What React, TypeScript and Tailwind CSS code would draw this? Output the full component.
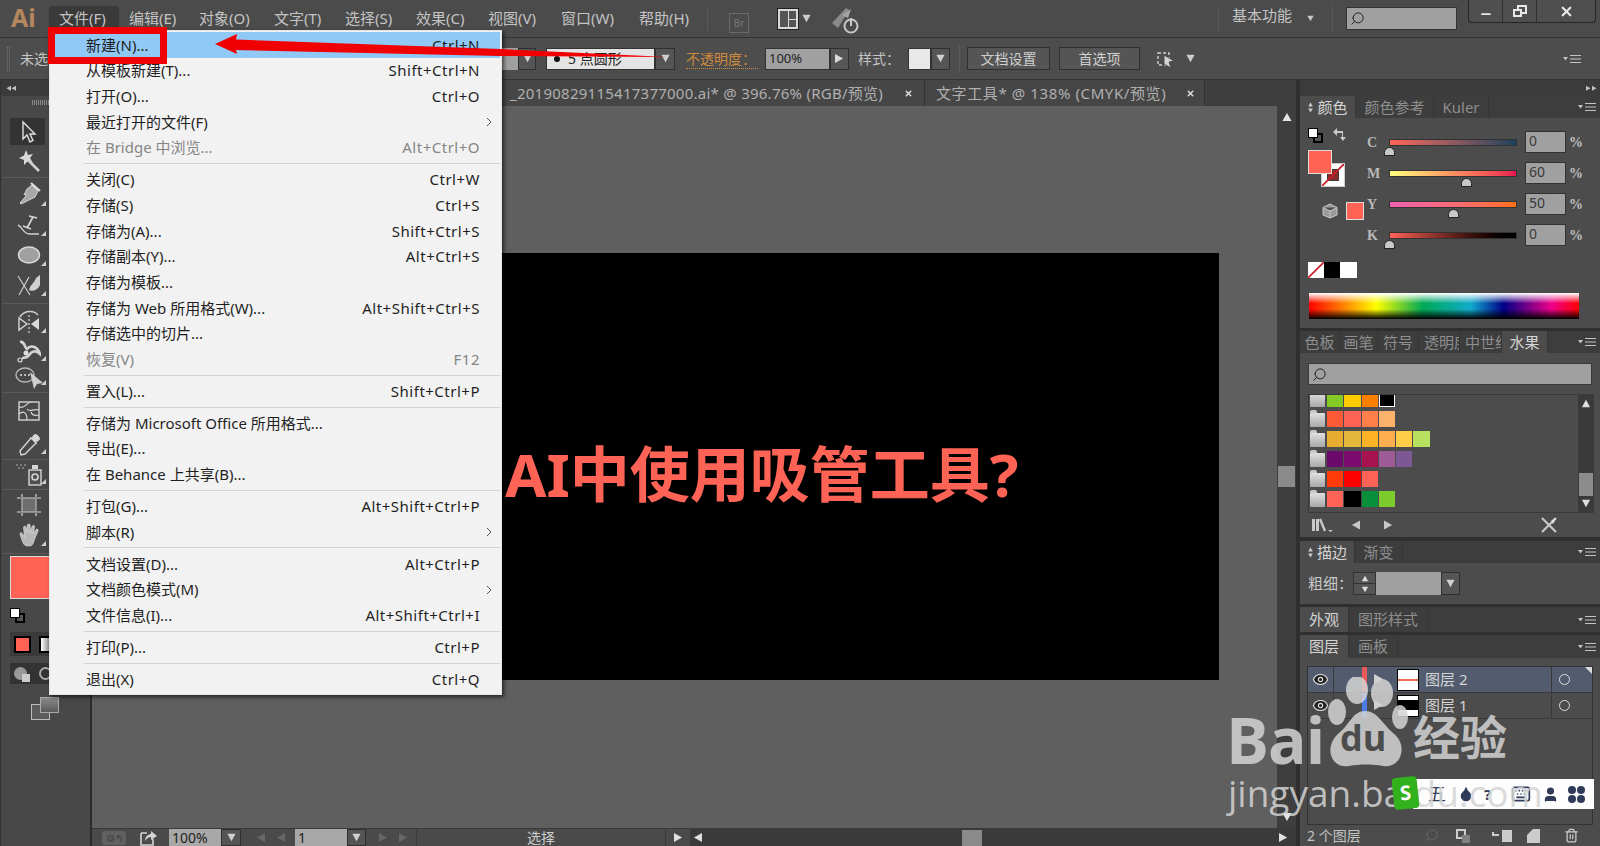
import React from "react";
import { Search, X, Minus, Eye, Keyboard, User, Trash2, Droplet } from "lucide-react";

const menuItems = [
  { label: "文件(F)", box: "w-[70px] pl-[10px] bg-[#3a3a3a] rounded-t-[3px]" },
  { label: "编辑(E)", box: "w-[80px] pl-[10px]" },
  { label: "对象(O)", box: "w-[75px]" },
  { label: "文字(T)", box: "w-[71px]" },
  { label: "选择(S)", box: "w-[71px]" },
  { label: "效果(C)", box: "w-[72px]" },
  { label: "视图(V)", box: "w-[73px]" },
  { label: "窗口(W)", box: "w-[78px]" },
  { label: "帮助(H)", box: "w-[69px]" },
];

const fileMenu: ({ label: string; keys?: string; off?: boolean; sub?: boolean; active?: boolean } | "sep")[] = [
  { label: "新建(N)...", keys: "Ctrl+N", active: true },
  { label: "从模板新建(T)...", keys: "Shift+Ctrl+N" },
  { label: "打开(O)...", keys: "Ctrl+O" },
  { label: "最近打开的文件(F)", sub: true },
  { label: "在 Bridge 中浏览...", keys: "Alt+Ctrl+O", off: true },
  "sep",
  { label: "关闭(C)", keys: "Ctrl+W" },
  { label: "存储(S)", keys: "Ctrl+S" },
  { label: "存储为(A)...", keys: "Shift+Ctrl+S" },
  { label: "存储副本(Y)...", keys: "Alt+Ctrl+S" },
  { label: "存储为模板..." },
  { label: "存储为 Web 所用格式(W)...", keys: "Alt+Shift+Ctrl+S" },
  { label: "存储选中的切片..." },
  { label: "恢复(V)", keys: "F12", off: true },
  "sep",
  { label: "置入(L)...", keys: "Shift+Ctrl+P" },
  "sep",
  { label: "存储为 Microsoft Office 所用格式..." },
  { label: "导出(E)..." },
  { label: "在 Behance 上共享(B)..." },
  "sep",
  { label: "打包(G)...", keys: "Alt+Shift+Ctrl+P" },
  { label: "脚本(R)", sub: true },
  "sep",
  { label: "文档设置(D)...", keys: "Alt+Ctrl+P" },
  { label: "文档颜色模式(M)", sub: true },
  { label: "文件信息(I)...", keys: "Alt+Shift+Ctrl+I" },
  "sep",
  { label: "打印(P)...", keys: "Ctrl+P" },
  "sep",
  { label: "退出(X)", keys: "Ctrl+Q" },
];

const swatchRows = [
  { box: "h-[12px] items-end", colors: ["#84c925", "#ffcc00", "#ff7f00", "#000000"] },
  { box: "h-[20px] items-end", colors: ["#ff5a36", "#ff6355", "#ff7f4a", "#ffb26b"] },
  { box: "h-[20px] items-end", colors: ["#e8ac30", "#e3b83b", "#ffb325", "#ffae4f", "#ffcd47", "#b7e15e"] },
  { box: "h-[20px] items-end", colors: ["#6b0a6b", "#7a0a6e", "#a8124f", "#9e5c96", "#7e5795"] },
  { box: "h-[20px] items-end", colors: ["#ff3b0a", "#ff0000", "#ff6358"] },
  { box: "h-[20px] items-end", colors: ["#ff6358", "#000000", "#078f3c", "#7ccb2f"] },
];

function Tri({ dir, className }: { dir: "up" | "down" | "left" | "right"; className?: string }) {
  const pts = { up: "0,10 5,1 10,10", down: "0,1 10,1 5,10", left: "10,0 10,10 1,5", right: "0,0 0,10 9,5" };
  return (
    <svg viewBox="0 0 10 11" className={className}>
      <polygon points={pts[dir]} fill="currentColor" />
    </svg>
  );
}

function PanelMenu() {
  return (
    <svg viewBox="0 0 18 10" className="h-[10px] w-[18px] text-[#c4c4c4]">
      <polygon points="0,3 5,3 2.5,6.5" fill="currentColor" />
      <path d="M7 1.5h11M7 5h11M7 8.5h11" stroke="currentColor" strokeWidth="1.2" />
    </svg>
  );
}

function Sep() {
  return <div className="h-full w-px bg-[#3a3a3a] border-r border-[#5a5a5a]" />;
}

function Dropdown({ className }: { className?: string }) {
  return (
    <div className={`flex h-full items-center justify-center border border-[#2f2f2f] bg-[#555555] text-[#d0d0d0] ${className}`}>
      <Tri dir="down" className="h-[9px] w-[9px]" />
    </div>
  );
}

function TitleBar() {
  return (
    <div className="flex h-[38px] shrink-0 border-b border-[#333333] bg-[#4b4b4b] text-[15px] text-[#c4c4c4]">
      <div className="flex w-[49px] items-start pl-[11px] pt-[1px] text-[25px] font-bold leading-[32px] text-[#b5875f]">Ai</div>
      <div className="flex pt-[6px]">
        {menuItems.map((m) => (
          <div key={m.label} className={`flex h-[24px] items-center whitespace-nowrap ${m.box}`}>
            {m.label}
          </div>
        ))}
      </div>
      <div className="my-[7px] ml-[-1px]"><Sep /></div>
      <div className="ml-[21px] mt-[13px] flex h-[20px] w-[20px] items-center justify-center border border-[#6a6a6a] text-[10px] text-[#777777]">Br</div>
      <div className="ml-[28px] mt-[8px] flex h-[22px] w-[22px] gap-px border border-[#222222] bg-[#d8d8d8] p-[2px]">
        <div className="w-[8px] bg-[#555555]" />
        <div className="flex flex-1 flex-col gap-px">
          <div className="flex-1 bg-[#555555]" />
          <div className="flex-1 bg-[#555555]" />
        </div>
      </div>
      <Tri dir="down" className="ml-[3px] mt-[14px] h-[9px] w-[9px] text-[#cccccc]" />
      <svg viewBox="0 0 30 28" className="ml-[19px] mt-[6px] h-[28px] w-[30px]">
        <path d="M2 17 L16 2 L19 4 L13 14 L8 22 Z" fill="#8a8a8a" />
        <path d="M12 9 L21 3 L18 12 Z" fill="#a5a5a5" />
        <circle cx="21" cy="20" r="6.5" fill="none" stroke="#c8c8c8" strokeWidth="2" />
        <path d="M21 12 V20" stroke="#c8c8c8" strokeWidth="2" />
      </svg>
      <div className="flex-1" />
      <div className="my-[6px]"><Sep /></div>
      <div className="ml-[13px] flex w-[61px] items-center whitespace-nowrap pb-[6px]">基本功能</div>
      <Tri dir="down" className="ml-[14px] mt-[15px] h-[7px] w-[7px] text-[#c4c4c4]" />
      <div className="my-[6px] ml-[18px]"><Sep /></div>
      <div className="ml-[13px] mt-[7px] flex h-[23px] w-[111px] items-center border border-[#333333] bg-[#a0a0a0] pl-[3px]">
        <Search size={15} strokeWidth={1.6} className="-scale-x-100 text-[#222222]" />
      </div>
      <div className="ml-[11px] mr-[4px] flex h-[23px] w-[128px] rounded-b-[4px] border border-t-0 border-[#262626] bg-[#4f4f4f] text-[#e8e8e8]">
        <div className="flex w-[34px] items-center justify-center border-r border-[#2f2f2f] pt-[5px]"><Minus size={14} strokeWidth={3} /></div>
        <div className="flex w-[34px] items-center justify-center border-r border-[#2f2f2f]">
          <div className="relative h-[12px] w-[14px]">
            <div className="absolute right-0 top-0 h-[9px] w-[10px] border-2 border-[#e8e8e8]" />
            <div className="absolute bottom-0 left-0 h-[8px] w-[9px] border-2 border-[#e8e8e8] bg-[#4f4f4f]" />
          </div>
        </div>
        <div className="flex flex-1 items-center justify-center"><X size={15} strokeWidth={3.5} /></div>
      </div>
    </div>
  );
}

function ControlBar() {
  return (
    <div className="flex h-[42px] shrink-0 items-center border-b border-[#333333] bg-[#4d4d4d] text-[14px] text-[#c4c4c4]">
      <div className="ml-[7px] h-[24px] w-[3px] border-x border-dotted border-[#777777]" />
      <div className="ml-[10px] w-[480px] whitespace-nowrap">未选择对象</div>
      <div className="flex h-[22px]">
        <div className="w-[18px] bg-[#a0a0a0]" />
        <Dropdown className="w-[18px]" />
      </div>
      <div className="ml-[10px] flex h-[22px]">
        <div className="flex w-[109px] items-center border border-[#333333] bg-[#e4e4e4] pl-[7px] text-[14px] text-[#222222]">
          <span className="mr-[8px] h-[6px] w-[6px] rounded-full bg-[#111111]" />
          <span className="whitespace-nowrap">5 点圆形</span>
        </div>
        <Dropdown className="w-[20px]" />
      </div>
      <span className="ml-[11px] w-[72px] whitespace-nowrap border-b border-dotted border-[#c98a3e] text-[#cf8b3c] leading-[19px]">不透明度：</span>
      <div className="ml-[7px] flex h-[22px]">
        <div className="w-[65px] border border-[#333333] bg-[#a0a0a0] pl-[3px] text-[13px] leading-[18px] text-[#222222]">100%</div>
        <div className="flex w-[19px] items-center justify-center border border-[#2f2f2f] bg-[#555555] text-[#d8d8d8]"><Tri dir="right" className="h-[10px] w-[9px]" /></div>
      </div>
      <span className="ml-[9px] w-[50px] whitespace-nowrap">样式：</span>
      <div className="flex h-[22px]">
        <div className="w-[23px] border border-[#333333] bg-[#e8e8e8]" />
        <Dropdown className="w-[19px]" />
      </div>
      <div className="ml-[9px] h-[28px]"><Sep /></div>
      <div className="ml-[7px] flex h-[23px] w-[83px] items-center justify-center border border-[#2f2f2f] bg-[#555555] text-[#d0d0d0]">文档设置</div>
      <div className="ml-[9px] flex h-[23px] w-[81px] items-center justify-center border border-[#2f2f2f] bg-[#555555] text-[#d0d0d0]">首选项</div>
      <svg viewBox="0 0 22 22" className="ml-[15px] h-[22px] w-[22px]">
        <rect x="3" y="5" width="11" height="12" fill="none" stroke="#cfcfcf" strokeWidth="1.4" strokeDasharray="3 2" />
        <path d="M9 7 L19 13 L14 14 L16 20 L9 16 Z" fill="#d4d4d4" stroke="#4d4d4d" />
      </svg>
      <Tri dir="down" className="ml-[9px] h-[9px] w-[9px] text-[#cccccc]" />
      <div className="flex-1" />
      <div className="mr-[19px]"><PanelMenu /></div>
    </div>
  );
}

function Tool({ h, corner, children }: { h: string; corner?: boolean; children?: React.ReactNode }) {
  return (
    <div className={`relative flex w-[54px] items-center justify-center ${h}`}>
      {children}
      {corner && <div className="absolute bottom-[4px] right-[10px] h-0 w-0 border-b-[5px] border-l-[5px] border-b-[#d0d0d0] border-l-transparent" />}
    </div>
  );
}

function ToolSep({ h }: { h: string }) {
  return (
    <div className={`flex w-[48px] items-center ${h}`}>
      <div className="h-px w-full bg-[#5a5a5a]" />
    </div>
  );
}

const iconBox = "h-[24px] w-[24px]";

function LeftTools() {
  return (
    <div className="flex w-[92px] shrink-0 flex-col border-l border-[#333333] border-r-2 border-r-[#2b2b2b] bg-[#484848]">
      <div className="flex h-[16px] items-center gap-0 bg-[#3b3b3b] pl-[5px] text-[#c4c4c4]">
        <Tri dir="left" className="h-[7px] w-[5px]" />
        <Tri dir="left" className="h-[7px] w-[5px]" />
      </div>
      <div className="ml-[31px] mt-[4px] h-[5px] w-[18px] border-x-0 bg-[repeating-linear-gradient(to_right,#8a8a8a_0,#8a8a8a_1px,transparent_1px,transparent_2px)]" />
      <div className="mt-[13px] flex flex-col pl-px">
        <div className="ml-[8px] flex h-[27px] w-[35px] items-center justify-center bg-[#333333]">
          <svg viewBox="0 0 24 24" className={iconBox}>
            <path d="M7 2 V19 L11 15 L14 22 L17 20.5 L14 14 L19 14 Z" fill="#3a3a3a" stroke="#e0e0e0" strokeWidth="1.4" />
          </svg>
        </div>
        <Tool h="h-[31px]">
          <svg viewBox="0 0 24 24" className={iconBox}>
            <polygon points="9,1 11,6 16,5 13,9 16,14 10.5,12.5 7,16 7,11 2,9 7,6.5" fill="#d8d8d8" />
            <path d="M11 11 L22 22" stroke="#d0d0d0" strokeWidth="2.6" />
          </svg>
        </Tool>
        <ToolSep h="h-[2px]" />
        <Tool h="h-[32px]" corner>
          <svg viewBox="0 0 24 24" className={iconBox}>
            <path d="M15 3 L21 9 L18 15 L4 22 L3 21 L9 14 L8 12 L7 13 L10 7 Z" fill="#a8a8a8" stroke="#d8d8d8" strokeWidth="1" />
            <path d="M14 1 L23 9" stroke="#e0e0e0" strokeWidth="2" />
          </svg>
        </Tool>
        <Tool h="h-[30px]" corner>
          <svg viewBox="0 0 24 24" className={iconBox}>
            <path d="M1 12 C5 14 7 21 12 21 L22 21" fill="none" stroke="#cfcfcf" strokeWidth="1.4" />
            <path d="M12 3 L20 5 M16 4 L10 15 M6 13 L14 16" fill="none" stroke="#d8d8d8" strokeWidth="1.6" />
          </svg>
        </Tool>
        <Tool h="h-[30px]" corner>
          <svg viewBox="0 0 24 24" className="h-[24px] w-[24px]">
            <ellipse cx="12" cy="12" rx="10.5" ry="8" fill="#a0a0a0" stroke="#dadada" strokeWidth="1.4" />
          </svg>
        </Tool>
        <Tool h="h-[30px]" corner>
          <svg viewBox="0 0 24 24" className={iconBox}>
            <path d="M1 3 L13 22 M12 4 L2 22" stroke="#cfcfcf" strokeWidth="1.2" />
            <path d="M23 2 L23 12 C21 17 15 19 12 17 C13 12 18 9 19 5 Z" fill="#d0d0d0" />
          </svg>
        </Tool>
        <ToolSep h="h-[7px]" />
        <Tool h="h-[30px]" corner>
          <svg viewBox="0 0 24 24" className={iconBox}>
            <path d="M3 7 C7 0 17 0 21 5" fill="none" stroke="#cfcfcf" strokeWidth="1.6" />
            <polygon points="2,8 10,14 2,20" fill="none" stroke="#d8d8d8" strokeWidth="1.4" />
            <polygon points="22,8 14,14 22,20" fill="#d8d8d8" />
            <path d="M12 5 V24" stroke="#d8d8d8" strokeWidth="1.2" strokeDasharray="2 2" />
          </svg>
        </Tool>
        <Tool h="h-[28px]" corner>
          <svg viewBox="0 0 24 24" className={iconBox}>
            <path d="M3 3 C8 2 7 8 10 10 C14 5 21 8 23 15 C19 11 15 12 13 15 C11 18 7 19 5 19" fill="none" stroke="#d4d4d4" strokeWidth="2.6" />
            <circle cx="9" cy="14" r="2.5" fill="#dddddd" />
            <circle cx="3" cy="21" r="2" fill="none" stroke="#dddddd" strokeWidth="1.2" />
          </svg>
        </Tool>
        <Tool h="h-[24px]" corner>
          <svg viewBox="0 0 28 24" className="h-[24px] w-[28px]">
            <ellipse cx="10" cy="10" rx="9" ry="7" fill="none" stroke="#b8b8b8" strokeWidth="1.4" />
            <path d="M5 10h2M9 10h2M13 10h2" stroke="#dddddd" strokeWidth="1.6" />
            <path d="M15 7 L28 18 L22 19 L19 24 Z" fill="#cfcfcf" />
          </svg>
        </Tool>
        <ToolSep h="h-[7px]" />
        <Tool h="h-[30px]">
          <svg viewBox="0 0 22 20" className="h-[20px] w-[22px]">
            <rect x="1" y="1" width="20" height="18" fill="#4a4a4a" stroke="#d4d4d4" strokeWidth="1.4" />
            <path d="M1 6 C7 8 8 2 13 1 M1 13 C6 9 9 12 9 19 M9 8 C12 12 15 7 21 9 M13 11 C14 14 17 15 21 14" fill="none" stroke="#d4d4d4" strokeWidth="1.2" />
          </svg>
        </Tool>
        <div className="h-[6px]" />
        <Tool h="h-[26px]" corner>
          <svg viewBox="0 0 24 24" className={iconBox}>
            <path d="M14 5 L19 10 L8 21 L4 22 L3 18 Z" fill="none" stroke="#d4d4d4" strokeWidth="1.4" />
            <path d="M13 4 L20 11 M17 2 C19 0 24 5 22 7 L19 9 L15 5 Z" fill="#d4d4d4" stroke="#d4d4d4" strokeWidth="1" />
          </svg>
        </Tool>
        <ToolSep h="h-[2px]" />
        <Tool h="h-[28px]" corner>
          <svg viewBox="0 0 28 24" className="h-[24px] w-[28px]">
            <rect x="14" y="8" width="12" height="15" fill="#505050" stroke="#d4d4d4" strokeWidth="1.4" />
            <circle cx="20" cy="15" r="3" fill="none" stroke="#d4d4d4" strokeWidth="1.6" />
            <rect x="17" y="3" width="6" height="4" fill="#d4d4d4" />
            <path d="M1 3h2M5 3h2M9 3h2M3 6h2M7 6h2" stroke="#b0b0b0" strokeWidth="1.2" />
          </svg>
        </Tool>
        <ToolSep h="h-[2px]" />
        <Tool h="h-[30px]">
          <svg viewBox="0 0 24 24" className={iconBox}>
            <rect x="5" y="5" width="14" height="14" fill="#6e6e6e" stroke="#b8b8b8" strokeWidth="1.2" />
            <path d="M5 1v3M19 1v3M5 20v3M19 20v3M0 5h4M0 19h4M20 5h4M20 19h4" stroke="#d8d8d8" strokeWidth="1.2" />
          </svg>
        </Tool>
        <Tool h="h-[30px]" corner>
          <svg viewBox="0 0 24 24" className="h-[26px] w-[26px]">
            <path
              d="M4 12 C3 10 5 9 6 11 L8 14 L7 5 C7 3.5 9 3.5 9.3 5 L10 10 L10.5 3 C10.7 1.5 12.8 1.5 13 3 L13.2 10 L15 4 C15.4 2.6 17.3 3 17 4.5 L15.8 11 L18.5 7 C19.3 6 21 6.8 20.3 8.2 L17 16 C16 20 15 22 13 22 L10 22 C7 22 6 18 4 12 Z"
              fill="#b8b8b8"
              stroke="#d8d8d8"
              strokeWidth="0.8"
            />
          </svg>
        </Tool>
        <ToolSep h="h-[6px]" />
        <div className="relative ml-[8px] h-[43px] w-[60px] border border-[#dddddd] bg-[#ff6356]" />
        <div className="flex h-[24px] items-end pl-[8px]">
          <div className="relative h-[15px] w-[15px]">
            <div className="absolute bottom-0 right-0 h-[10px] w-[10px] border-2 border-black bg-[#555555]" />
            <div className="absolute left-0 top-0 h-[10px] w-[10px] border border-black bg-white" />
          </div>
        </div>
        <div className="ml-[8px] mt-[9px] flex h-[24px] w-[60px] items-center gap-[8px] bg-[#3a3a3a] pl-[4px]">
          <div className="h-[17px] w-[17px] border-2 border-black bg-[#ff6356]" />
          <div className="h-[17px] w-[17px] border-2 border-black bg-linear-to-r from-white to-[#555555]" />
        </div>
        <div className="ml-[8px] mt-[7px] flex h-[21px] w-[60px] items-center gap-[12px] bg-[#333333] pl-[4px]">
          <div className="relative h-[13px] w-[13px] rounded-full bg-[#999999]">
            <div className="absolute -bottom-[2px] -right-[3px] h-[8px] w-[8px] bg-[#cccccc]" />
          </div>
          <div className="h-[13px] w-[13px] rounded-full border-2 border-[#aaaaaa]" />
        </div>
        <div className="relative ml-[29px] mt-[13px] h-[23px] w-[28px]">
          <div className="absolute bottom-0 left-0 h-[16px] w-[19px] border border-[#bbbbbb] bg-[#5c5c5c]" />
          <div className="absolute right-0 top-0 h-[16px] w-[19px] border border-[#aaaaaa] bg-linear-to-b from-[#8a8a8a] to-[#5a5a5a]" />
        </div>
      </div>
    </div>
  );
}

function Center() {
  return (
    <div className="flex min-w-0 flex-1 flex-col bg-[#3e3e3e]">
      <div className="flex h-[26px] shrink-0 text-[15px] text-[#b0b0b0]">
        <div className="flex w-[833px] items-center justify-end whitespace-nowrap border-r border-[#333333] bg-[#464646] pr-[11px]">
          <span className="tracking-[0.25px]">_20190829115417377000.ai* @ 396.76% (RGB/预览)</span>
          <X size={9} strokeWidth={4} className="ml-[21px] text-[#dddddd]" />
        </div>
        <div className="flex w-[280px] items-center whitespace-nowrap border-r border-[#333333] bg-[#464646] pl-[11px]">
          <span className="w-[231px] tracking-[0.6px]">文字工具* @ 138% (CMYK/预览)</span>
          <X size={9} strokeWidth={4} className="ml-[19px] text-[#dddddd]" />
        </div>
      </div>
      <div className="flex min-h-0 flex-1">
        <div className="relative min-w-0 flex-1 overflow-hidden bg-[#5f5f5f]">
          <div className="absolute left-[300px] top-[147px] h-[427px] w-[827px] bg-black">
            <div className="absolute left-[113px] top-[178px] whitespace-nowrap text-[60px] font-bold leading-[86px] text-[#ff6356]">
              AI中使用吸管工具?
            </div>
          </div>
        </div>
        <div className="flex w-[19px] shrink-0 flex-col items-center bg-[#3e3e3e] text-[#e4e4e4]">
          <Tri dir="up" className="mt-[6px] h-[10px] w-[12px]" />
          <div className="mt-[344px] h-[21px] w-[17px] bg-[#8a8a8a]" />
          <div className="flex-1" />
          <Tri dir="down" className="mb-[6px] h-[10px] w-[12px]" />
        </div>
      </div>
      <div className="flex h-[18px] shrink-0 items-center border-t border-[#3a3a3a] bg-[#4a4a4a] text-[14px] text-[#bbbbbb]">
        <div className="ml-[10px] flex h-[14px] w-[24px] items-center justify-center rounded-[2px] bg-[#606060] text-[10px] leading-none text-[#404040]">⚙↰</div>
        <svg viewBox="0 0 18 16" className="ml-[13px] h-[16px] w-[18px]">
          <path d="M2 3 H8 M2 3 V15 H14 V9" fill="none" stroke="#d4d4d4" strokeWidth="1.6" />
          <path d="M6 11 C6 6 10 4 12 4 V1 L18 6 L12 10 V7 C10 7 8 8 6 11 Z" fill="#d4d4d4" />
        </svg>
        <div className="ml-[12px] h-full w-[52px] bg-[#a8a8a8] pl-[3px] leading-[18px] text-[#222222]">100%</div>
        <Dropdown className="w-[20px]" />
        <Tri dir="left" className="ml-[15px] h-[12px] w-[9px] text-[#666666]" />
        <Tri dir="left" className="ml-[11px] h-[12px] w-[9px] text-[#666666]" />
        <div className="ml-[10px] h-full w-[52px] bg-[#a8a8a8] pl-[3px] leading-[18px] text-[#222222]">1</div>
        <Dropdown className="w-[19px]" />
        <Tri dir="right" className="ml-[13px] h-[12px] w-[9px] text-[#666666]" />
        <Tri dir="right" className="ml-[11px] h-[12px] w-[9px] text-[#666666]" />
        <div className="ml-[8px] flex h-full w-[250px] items-center justify-center border-x border-[#3d3d3d] text-[#cccccc]">选择</div>
        <Tri dir="right" className="ml-[8px] h-[12px] w-[9px] text-[#e0e0e0]" />
        <div className="ml-[7px] flex h-full flex-1 items-center bg-[#3a3a3a] text-[#e0e0e0]">
          <Tri dir="left" className="ml-[3px] h-[12px] w-[9px]" />
          <div className="ml-[260px] h-[16px] w-[20px] bg-[#8a8a8a]" />
          <div className="flex-1" />
          <Tri dir="right" className="mr-[8px] h-[12px] w-[9px]" />
        </div>
      </div>
    </div>
  );
}

function PanelTabs({ tabs, className }: { tabs: { label: string; w: string; active?: boolean; clip?: boolean; updown?: boolean }[]; className?: string }) {
  return (
    <div className={`flex shrink-0 bg-[#3d3d3d] text-[15px] ${className}`}>
      {tabs.map((t) => (
        <div
          key={t.label}
          className={`flex items-center overflow-hidden whitespace-nowrap border-r border-[#363636] ${t.clip ? "justify-start pl-[5px]" : "justify-center"} ${t.w} ${t.active ? "bg-[#4c4c4c] text-[#d4d4d4]" : "text-[#8e8e8e]"}`}
        >
          {t.updown && (
            <div className="mr-[3px] flex flex-col gap-px text-[#cccccc]">
              <Tri dir="up" className="h-[5px] w-[7px]" />
              <Tri dir="down" className="h-[5px] w-[7px]" />
            </div>
          )}
          {t.label}
        </div>
      ))}
      <div className="flex flex-1 items-center justify-end pr-[4px]"><PanelMenu /></div>
    </div>
  );
}

function Slider({ label, track, thumb, value }: { label: string; track: string; thumb: string; value: string }) {
  return (
    <div className="flex h-[22px] items-center text-[#c0c0c0]">
      <span className="w-[22px] font-['Liberation_Serif',serif] text-[14px] font-bold text-[#b8b8b8]">{label}</span>
      <div className="relative h-[7px] w-[128px]">
        <div className={`h-full w-full border border-[#333333] ${track}`} />
        <div className={`absolute top-[8px] h-[9px] w-[11px] rounded-t-full border border-[#222222] bg-[#c8c8c8] ${thumb}`} />
      </div>
      <div className="ml-[8px] h-[22px] w-[41px] border border-[#333333] bg-[#a0a0a0] pl-[3px] text-[14px] leading-[18px] text-[#3a3a3a]">{value}</div>
      <span className="ml-[3px] font-['Liberation_Serif',serif] text-[14px] font-bold text-[#c0c0c0]">%</span>
    </div>
  );
}

function ColorPanel() {
  return (
    <div className="flex h-[210px] shrink-0 flex-col bg-[#4c4c4c] pl-[8px]">
      <div className="flex h-[144px]">
        <div className="w-[59px]">
          <div className="mt-[10px] flex h-[14px] items-start gap-[9px]">
            <div className="relative h-[15px] w-[15px]">
              <div className="absolute bottom-0 right-0 h-[10px] w-[10px] border-2 border-black bg-[#555555]" />
              <div className="absolute left-0 top-0 h-[10px] w-[10px] border border-black bg-white" />
            </div>
            <svg viewBox="0 0 14 14" className="h-[14px] w-[14px]">
              <path d="M1 4 L5 0 V3 H11 V9 H14 L11 13 L8 9 H10 V5 H5 V8 Z" fill="#c8c8c8" />
            </svg>
          </div>
          <div className="relative mt-[8px] h-[37px] w-[37px]">
            <div className="absolute bottom-0 right-0 h-[24px] w-[24px] border border-[#cccccc] bg-white">
              <svg viewBox="0 0 24 24" className="h-full w-full">
                <rect x="6" y="6" width="12" height="12" fill="#8a2a2a" stroke="#333" />
                <path d="M0 24 L24 0" stroke="#c8202a" strokeWidth="2" />
              </svg>
            </div>
            <div className="absolute left-0 top-0 h-[24px] w-[24px] border border-[#dddddd] bg-[#ff6356]" />
          </div>
          <div className="ml-[14px] mt-[15px] flex items-center gap-[8px]">
            <svg viewBox="0 0 16 16" className="h-[16px] w-[16px]">
              <path d="M8 1 L15 4.5 V12 L8 15 L1 12 V4.5 Z M1 4.5 L8 8 L15 4.5 M8 8 V15" fill="#9a9a9a" stroke="#c8c8c8" strokeWidth="1" />
            </svg>
            <div className="h-[18px] w-[18px] border border-[#dddddd] bg-[#ff6356]" />
          </div>
        </div>
        <div className="flex flex-col gap-[9px] pt-[13px]">
          <Slider label="C" value="0" track="bg-linear-to-r from-[#ff6356] to-[#17405c]" thumb="-left-[5px]" />
          <Slider label="M" value="60" track="bg-linear-to-r from-[#ffff80] via-[#ff9060] to-[#e8104f]" thumb="left-[72px]" />
          <Slider label="Y" value="50" track="bg-linear-to-r from-[#f060b0] to-[#ff7000]" thumb="left-[59px]" />
          <Slider label="K" value="0" track="bg-linear-to-r from-[#ff6356] to-black" thumb="-left-[5px]" />
        </div>
      </div>
      <div className="flex h-[16px]">
        <svg viewBox="0 0 16 16" className="h-[16px] w-[16px] bg-white">
          <path d="M0 16 L16 0" stroke="#c8202a" strokeWidth="1.6" />
        </svg>
        <div className="h-[16px] w-[16px] bg-black" />
        <div className="h-[16px] w-[17px] bg-white" />
      </div>
      <div className="ml-px mt-[15px] h-[26px] w-[270px] bg-[linear-gradient(to_bottom,#fff_0%,transparent_40%,transparent_62%,#000_100%),linear-gradient(to_right,#f00,#ff0_25%,#0a5_42%,#1ac_60%,#008_72%,#e08_90%,#f00)]" />
    </div>
  );
}

function Folder() {
  return (
    <div className="relative mr-px h-[14px] w-[15px] rounded-[1px] bg-linear-to-b from-[#e0e0e0] to-[#a8a8a8]">
      <div className="absolute -top-[3px] left-0 h-[3px] w-[7px] rounded-t-[2px] bg-[#c8c8c8]" />
    </div>
  );
}

function SwatchPanel() {
  return (
    <div className="flex h-[184px] shrink-0 flex-col bg-[#4c4c4c] px-[8px]">
      <div className="mt-[10px] flex h-[22px] w-[284px] items-center border border-[#3a3a3a] bg-[#a0a0a0] pl-[3px]">
        <Search size={15} strokeWidth={1.6} className="-scale-x-100 text-[#222222]" />
      </div>
      <div className="mt-[9px] flex h-[119px] w-[286px] border border-[#3a3a3a]">
        <div className="flex-1 overflow-hidden pb-[6px]">
          {swatchRows.map((row, i) => (
            <div key={i} className={`flex gap-px pl-px ${row.box}`}>
              <Folder />
              {row.colors.map((c, j) => (
                <div
                  key={j}
                  className={`h-[16px] w-[16.3px] ${i === 0 ? "h-[11px]" : ""} ${c === "#000000" && i === 0 ? "border border-white" : ""}`}
                  style={{ backgroundColor: c }}
                />
              ))}
            </div>
          ))}
        </div>
        <div className="flex w-[15px] flex-col items-center bg-[#3a3a3a] text-[#e0e0e0]">
          <Tri dir="up" className="mt-[4px] h-[9px] w-[10px]" />
          <div className="flex-1" />
          <div className="mb-[3px] h-[23px] w-[14px] bg-[#8c8c8c]" />
          <Tri dir="down" className="mb-[4px] h-[9px] w-[10px]" />
        </div>
      </div>
      <div className="flex flex-1 items-center text-[#c8c8c8]">
        <svg viewBox="0 0 22 14" className="ml-[4px] h-[14px] w-[22px]">
          <rect x="0" y="1" width="3" height="12" fill="#c8c8c8" />
          <rect x="4" y="1" width="3" height="12" fill="#c8c8c8" />
          <path d="M8 1 L13 13" stroke="#c8c8c8" strokeWidth="2.4" />
          <path d="M16 12 H21 L18.5 14 Z" fill="#c8c8c8" />
        </svg>
        <Tri dir="left" className="ml-[17px] h-[13px] w-[9px]" />
        <Tri dir="right" className="ml-[24px] h-[13px] w-[9px]" />
        <svg viewBox="0 0 16 16" className="ml-[148px] h-[16px] w-[16px]">
          <path d="M1 1 L15 15 M15 1 L1 15" stroke="#c8c8c8" strokeWidth="2.2" />
          <path d="M10 4 L14 1 L15 2 L12 7 Z" fill="#e0e0e0" />
        </svg>
      </div>
    </div>
  );
}

function LayerRow({ name, selected, bar, thumb }: { name: string; selected?: boolean; bar: string; thumb: React.ReactNode }) {
  return (
    <div className={`relative flex h-[26px] items-center border-b border-[#3a3a3a] ${selected ? "bg-[#525c6e]" : "bg-[#4c4c4c]"}`}>
      <div className="flex h-full w-[26px] items-center justify-center border-r border-[#3a3a3a]">
        <Eye size={17} className="text-[#dddddd]" fill="#222" strokeWidth={1.6} />
      </div>
      <div className="flex h-full w-[34px] justify-end pr-[1px]"><div className={`h-full w-[5px] ${bar}`} /></div>
      <Tri dir="right" className="ml-[6px] h-[13px] w-[10px] text-[#cfcfcf]" />
      <div className="ml-[13px] h-[22px] w-[22px] border border-black bg-white">{thumb}</div>
      <span className="ml-[6px] w-[126px] whitespace-nowrap text-[15px] text-[#d4d4d4]">{name}</span>
      <div className="flex h-full flex-1 items-center border-l border-[#3a3a3a] pl-[7px]">
        <div className="h-[11px] w-[11px] rounded-full border border-[#dddddd]" />
      </div>
      {selected && <div className="absolute right-0 top-0 h-0 w-0 border-l-[7px] border-t-[7px] border-l-transparent border-t-[#dddddd]" />}
    </div>
  );
}

function LayersPanel() {
  return (
    <div className="flex flex-1 flex-col bg-[#4c4c4c]">
      <div className="mx-[7px] mt-[8px] flex h-[159px] flex-col border border-[#333333]">
        <LayerRow name="图层  2" selected bar="bg-[#e85a5a]" thumb={<div className="mt-[9px] h-[2px] bg-[#e86a5a]" />} />
        <LayerRow name="图层  1" bar="bg-[#4a7be0]" thumb={<div className="mt-[4px] h-[10px] bg-black" />} />
      </div>
      <div className="flex flex-1 items-center pl-[7px] text-[#c4c4c4]">
        <span className="w-[117px] whitespace-nowrap text-[14px]">2 个图层</span>
        <Search size={15} strokeWidth={1.5} className="-scale-x-100 text-[#6a6a6a]" />
        <div className="relative ml-[17px] h-[14px] w-[14px]">
          <div className="absolute left-0 top-0 h-[10px] w-[10px] border-2 border-[#cccccc]" />
          <div className="absolute bottom-0 right-0 h-[8px] w-[8px] bg-[#808080]" />
        </div>
        <div className="ml-[22px] flex items-start gap-[3px]">
          <div className="mt-[2px] h-[4px] w-[7px] border-b-2 border-l-2 border-[#cccccc]" />
          <div className="h-[12px] w-[10px] bg-[#cccccc]" />
        </div>
        <div className="relative ml-[15px] h-[14px] w-[13px] bg-[#cccccc]">
          <div className="absolute left-0 top-0 h-0 w-0 border-r-[6px] border-t-[6px] border-r-transparent border-t-[#4c4c4c]" />
        </div>
        <Trash2 size={15} className="ml-[24px] text-[#cccccc]" />
      </div>
    </div>
  );
}

function RightDock() {
  return (
    <div className="flex w-[304px] shrink-0 flex-col border-l-4 border-[#2f2f2f] bg-[#2f2f2f]">
      <div className="flex h-[16px] shrink-0 items-center justify-end bg-[#3b3b3b] pr-[3px] text-[#c4c4c4]">
        <Tri dir="right" className="h-[7px] w-[5px]" />
        <Tri dir="right" className="ml-px h-[7px] w-[5px]" />
      </div>
      <PanelTabs
        className="h-[22px]"
        tabs={[
          { label: "颜色", w: "w-[56px]", active: true, updown: true },
          { label: "颜色参考", w: "w-[78px]" },
          { label: "Kuler", w: "w-[55px]" },
        ]}
      />
      <ColorPanel />
      <PanelTabs
        className="mt-[3px] h-[22px]"
        tabs={[
          { label: "色板", w: "w-[40px]" },
          { label: "画笔", w: "w-[38px]" },
          { label: "符号", w: "w-[41px]" },
          { label: "透明度", w: "w-[41px]", clip: true },
          { label: "中世纪", w: "w-[42px]", clip: true },
          { label: "水果", w: "w-[46px]", active: true },
        ]}
      />
      <SwatchPanel />
      <PanelTabs
        className="mt-[4px] h-[22px]"
        tabs={[
          { label: "描边", w: "w-[55px]", active: true, updown: true },
          { label: "渐变", w: "w-[48px]" },
        ]}
      />
      <div className="flex h-[41px] shrink-0 items-center bg-[#4c4c4c] pl-[8px] text-[15px] text-[#c8c8c8]">
        <span className="w-[45px] whitespace-nowrap">粗细：</span>
        <div className="flex h-[23px]">
          <div className="flex w-[23px] flex-col border border-[#333333] bg-[#555555] text-[#dddddd]">
            <div className="flex flex-1 items-center justify-center border-b border-[#333333]"><Tri dir="up" className="h-[7px] w-[8px]" /></div>
            <div className="flex flex-1 items-center justify-center"><Tri dir="down" className="h-[7px] w-[8px]" /></div>
          </div>
          <div className="w-[65px] bg-[#a0a0a0]" />
          <Dropdown className="w-[19px]" />
        </div>
      </div>
      <PanelTabs
        className="mt-[3px] h-[25px]"
        tabs={[
          { label: "外观", w: "w-[49px]", active: true },
          { label: "图形样式", w: "w-[79px]" },
        ]}
      />
      <PanelTabs
        className="mt-[3px] h-[23px]"
        tabs={[
          { label: "图层", w: "w-[49px]", active: true },
          { label: "画板", w: "w-[49px]" },
        ]}
      />
      <LayersPanel />
    </div>
  );
}

function FileMenu() {
  return (
    <div className="absolute left-[49px] top-[30px] flex w-[453px] flex-col border border-[#e6e6e6] bg-[#f2f2f2] pb-[2px] pt-[1px] text-[15px] shadow-[2px_2px_4px_rgba(0,0,0,0.6)]">
      {fileMenu.map((item, i) =>
        item === "sep" ? (
          <div key={i} className="flex h-[6.2px] items-center pl-[34px] pr-px">
            <div className="h-px w-full bg-[#d4d4d4]" />
          </div>
        ) : (
          <div
            key={i}
            className={`relative mx-px flex h-[25.7px] items-center justify-between whitespace-nowrap pl-[35px] pr-[20px] ${item.active ? "bg-[#90c8f6]" : ""} ${item.off ? "text-[#868686]" : "text-[#1f1f1f]"}`}
          >
            <span>{item.label}</span>
            {item.keys && <span className="tracking-[0.5px]">{item.keys}</span>}
            {item.sub && (
              <svg viewBox="0 0 6 10" className="absolute right-[8px] h-[10px] w-[6px]">
                <path d="M1 1 L5 5 L1 9" fill="none" stroke="#555555" strokeWidth="1" />
              </svg>
            )}
          </div>
        ),
      )}
    </div>
  );
}

function Watermark() {
  return (
    <div className="pointer-events-none absolute left-[1226px] top-[672px] w-[304px] text-[#d4d4d4]/85">
      <div className="flex items-start">
        <span className="mt-[33px] w-[101px] font-['Open_Sans',sans-serif] text-[64px] font-bold leading-[70px] tracking-[-1px]">Bai</span>
        <div className="relative mt-[5px] h-[90px] w-[81px] shrink-0">
          <svg viewBox="0 0 81 90" className="absolute inset-0 h-full w-full" fill="currentColor">
            <ellipse cx="10" cy="35" rx="9" ry="13" />
            <ellipse cx="30" cy="13" rx="11" ry="14" />
            <ellipse cx="55" cy="16" rx="11" ry="14" />
            <ellipse cx="73" cy="40" rx="8" ry="12" />
            <path d="M38 34 C50 34 55 46 66 56 C82 68 74 92 56 89 C46 87 32 87 22 89 C4 92 -4 70 12 56 C23 47 26 34 38 34 Z" />
          </svg>
          <span className="absolute left-[13px] top-[41px] font-['Open_Sans',sans-serif] text-[36px] font-bold leading-[40px] text-[#4c4c4c]">du</span>
        </div>
        <span className="ml-[5px] mt-[37px] shrink-0 whitespace-nowrap text-[47px] font-bold leading-[56px]">经验</span>
      </div>
      <div className="ml-[2px] mt-[-4px] whitespace-nowrap font-['Open_Sans',sans-serif] text-[37px] leading-[44px]">jingyan.baidu.com</div>
    </div>
  );
}

function ImeBar() {
  return (
    <div className="absolute left-[1393px] top-[776px] flex h-[33px] w-[201px] items-center">
      <div className="z-10 flex h-[32px] w-[25px] -rotate-6 items-center justify-center rounded-[4px] bg-[#31b11c] text-[20px] font-bold text-white">S</div>
      <div className="-ml-[5px] mt-[3px] flex h-[30px] flex-1 items-center bg-[#fdfdfd] pl-[15px] text-[#2f3b58]">
        <span className="text-[18px] leading-none">五</span>
        <Droplet size={16} fill="#2f3b58" className="ml-[12px]" />
        <span className="ml-[10px] text-[15px] font-bold leading-none">?</span>
        <Keyboard size={20} className="ml-[20px]" />
        <User size={17} fill="#2f3b58" className="ml-[11px]" />
        <div className="ml-[9px] grid grid-cols-2 gap-px">
          <div className="h-[8px] w-[8px] rounded-full bg-[#2f3b58]" />
          <div className="h-[8px] w-[8px] rounded-full bg-[#2f3b58]" />
          <div className="h-[8px] w-[8px] rounded-full bg-[#2f3b58]" />
          <div className="h-[8px] w-[8px] rounded-full bg-[#2f3b58]" />
        </div>
      </div>
    </div>
  );
}

export default function App() {
  return (
    <div className="relative flex h-[846px] w-[1600px] flex-col overflow-hidden bg-[#4a4a4a] font-['Noto_Sans','Noto_Sans_CJK_SC',sans-serif]">
      <TitleBar />
      <ControlBar />
      <div className="flex min-h-0 flex-1">
        <LeftTools />
        <Center />
        <RightDock />
      </div>

      <FileMenu />

      {/* red annotation drawn over the screenshot */}
      <div className="absolute left-[48px] top-[27px] h-[37px] w-[119px] border-[7px] border-[#f00000]" />
      <svg viewBox="0 0 700 70" className="absolute left-0 top-0 h-[70px] w-[700px]">
        <polygon points="215,44 237,34 236,39.5 500,49 668,57 500,56 236,50 237,54" fill="#f00000" />
      </svg>

      <ImeBar />
      <Watermark />
    </div>
  );
}
